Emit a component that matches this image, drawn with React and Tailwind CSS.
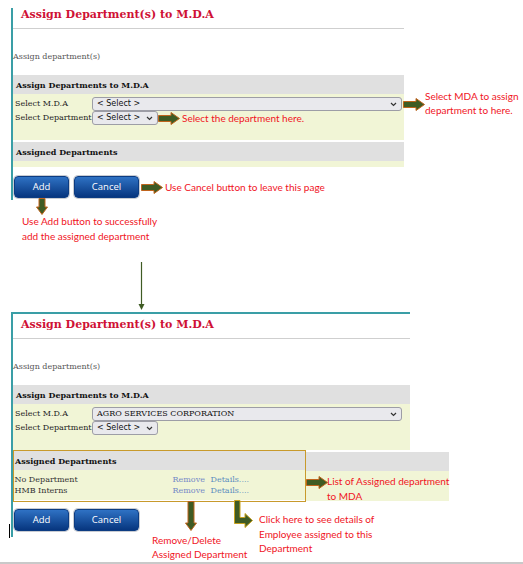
import React from "react"

const serif = "font-['DejaVu_Serif',serif]"
const note = "whitespace-nowrap font-['Lato',sans-serif] text-[10px] text-[#f0141e]"

function RightArrow({ className = "" }) {
  return (
    <svg className={`shrink-0 ${className}`} width="22" height="13" viewBox="0 0 22 13">
      <polygon
        points="0.5,3.5 13,3.5 13,0.5 21.5,6.5 13,12.5 13,9.5 0.5,9.5"
        fill="#3f5b24"
        stroke="#c0641c"
        strokeWidth="1"
      />
    </svg>
  )
}

function DownArrow({ className = "", len }) {
  const h = len
  return (
    <svg className={`shrink-0 ${className}`} width="12" height={h} viewBox={`0 0 12 ${h}`}>
      <polygon
        points={`3,0.5 9,0.5 9,${h - 8} 11.5,${h - 8} 6,${h - 0.5} 0.5,${h - 8} 3,${h - 8}`}
        fill="#3f5b24"
        stroke="#c0641c"
        strokeWidth="1"
      />
    </svg>
  )
}

function Chevron() {
  return (
    <svg width="7" height="5" viewBox="0 0 7 5">
      <path d="M1 1 L3.5 3.5 L6 1" fill="none" stroke="#333" strokeWidth="1.2" />
    </svg>
  )
}

function SelectBox({ value, wide, valueSerif }) {
  return (
    <div
      className={`flex h-[14px] shrink-0 items-center justify-between rounded-[3px] border border-[#9d9da6] bg-[#e9e9ed] pl-[4px] pr-[4px] ${
        wide ? "w-[310px]" : "w-[66px]"
      }`}
    >
      <span
        className={`text-[8px] leading-none text-[#111] ${
          valueSerif ? serif : "font-['DejaVu_Sans',sans-serif]"
        }`}
      >
        {value}
      </span>
      <Chevron />
    </div>
  )
}

function Button({ children, w }) {
  return (
    <div
      className={`flex h-[22px] ${w} items-center justify-center rounded-[4px] border border-[#0c3c82] bg-linear-to-b from-[#2f72c4] to-[#07367f] font-['Open_Sans',sans-serif] text-[9.5px] text-white shadow-[0_0_0_1px_#c9ccd2]`}
    >
      {children}
    </div>
  )
}

function Buttons() {
  return (
    <div className="flex shrink-0 gap-[5px] pl-[1px]">
      <Button w="w-[55px]">Add</Button>
      <Button w="w-[65px]">Cancel</Button>
    </div>
  )
}

function Header({ children, className = "" }) {
  return (
    <div
      className={`flex h-[19px] items-center bg-[#e0e0e0] ${serif} text-[8px] font-bold text-[#111] ${className}`}
    >
      {children}
    </div>
  )
}

function Panel({ top, mda, width, notes, children }) {
  return (
    <div
      className={`ml-[11px] border-l-2 border-[#3a9ea6] ${width} ${
        top ? "border-t-2" : ""
      }`}
    >
      {/* title */}
      <div
        className={`border-b-[1.5px] border-[#cfcfcf] pl-[8px] ${
          top ? "h-[25px] pt-[4px]" : "h-[21px]"
        }`}
      >
        <h1 className={`${serif} text-[11px] font-bold leading-[14px] text-[#cf1135]`}>
          Assign Department(s) to M.D.A
        </h1>
      </div>

      <div className={`h-[46px] pt-[22px] ${serif} text-[8px] leading-[12px] text-[#555]`}>
        Assign department(s)
      </div>

      {/* form section */}
      <Header className="pl-[3px]">Assign Departments to M.D.A</Header>
      <div className={`h-[46px] bg-[#f1f5d6] pt-[3px] pl-[2px] ${serif} text-[8px] text-[#222]`}>
        <div className="flex h-[14px] items-center">
          <span className="w-[77px] shrink-0">Select M.D.A</span>
          <SelectBox value={mda} wide valueSerif={mda !== "< Select >"} />
          {notes && (
            <>
              <RightArrow className="ml-[1px]" />
              <p className={`-mt-[2px] leading-[14px] ${note}`}>
                Select MDA to assign
                <br />
                department to here.
              </p>
            </>
          )}
        </div>
        <div className="flex h-[14px] items-center">
          <span className="w-[77px] shrink-0 whitespace-nowrap">Select Department</span>
          <SelectBox value="< Select >" />
          {notes && (
            <>
              <RightArrow />
              <p className={`ml-[2px] leading-[14px] ${note}`}>Select the department here.</p>
            </>
          )}
        </div>
      </div>

      {children}
    </div>
  )
}

export default function App() {
  const assigned = ["No Department", "HMB Interns"]

  return (
    <div className="relative h-[564px] w-[523px] overflow-hidden bg-white">
      <div className="pt-[8px]">
        <Panel mda="< Select >" width="w-[393px]" notes>
          <Header className="mt-[2px] pl-[3px]">Assigned Departments</Header>
          <div className="h-[6px] bg-[#f1f5d6]" />
          <div className="flex items-center pt-[9px] pb-[2px]">
            <Buttons />
            <RightArrow className="ml-[2px]" />
            <p className={`ml-[2px] leading-[14px] ${note}`}>
              Use Cancel button to leave this page
            </p>
          </div>
        </Panel>
      </div>

      {/* note under Add + connector between the two screenshots */}
      <div className="flex flex-col">
        <DownArrow className="-mt-[2px] ml-[36px]" len={17} />
        <p className={`-mt-[1px] ml-[22px] leading-[15px] ${note}`}>
          Use Add button to successfully
          <br />
          add the assigned department
        </p>
        <svg className="mt-[18px] mb-[2px] ml-[138px]" width="7" height="48" viewBox="0 0 7 48">
          <line x1="3.5" y1="0" x2="3.5" y2="43" stroke="#3f5b24" strokeWidth="1.2" />
          <polygon points="0.5,42 6.5,42 3.5,48" fill="#3f5b24" />
        </svg>
      </div>

      <Panel top mda="AGRO SERVICES CORPORATION" width="w-[399px]">
        <div className="flex h-[52px]">
          {/* highlighted list */}
          <div className={`w-[293px] shrink-0 border-[1.5px] border-[#c89a2c] ${serif} text-[8px]`}>
            <Header className="pl-[1px]">Assigned Departments</Header>
            <div className="bg-[#f1f5d6] pt-[4px] pb-[3px] pl-[0.5px] text-[#333]">
              {assigned.map((d) => (
                <div key={d} className="flex h-[11.5px] items-center">
                  <span className="w-[158px]">{d}</span>
                  <span className="w-[38px] text-[#7488c6]">Remove</span>
                  <span className="text-[#5b8dbf]">Details....</span>
                </div>
              ))}
            </div>
          </div>
          <div className="flex flex-1 flex-col py-[1.5px]">
            <div className="h-[19px] shrink-0 bg-[#e0e0e0]" />
            <div className="flex flex-1 items-start bg-[#f1f5d6] pt-[3px]">
              <RightArrow className="mt-[2px]" />
              <p className={`-ml-[1px] h-[26px] leading-[15px] ${note}`}>
                List of Assigned department
                <br />
                to MDA
              </p>
            </div>
          </div>
        </div>

        <div className="flex h-[35px] items-start">
          <div className="mt-[7px]">
            <Buttons />
          </div>
          <div className="ml-[13px] flex w-[82px] shrink-0 flex-col">
            <DownArrow className="-mt-[1px] ml-[33px]" len={30} />
            <p className={`mt-[2px] leading-[14px] ${note}`}>
              Remove/Delete
              <br />
              Assigned Department
            </p>
          </div>
          <div className="flex items-start">
            <svg className="-mt-[2px] shrink-0" width="20" height="29" viewBox="0 0 20 29">
              <polygon
                points="0.5,0.5 6,0.5 6,17.5 11,17.5 11,13.5 18.5,20.5 11,27.5 11,23.5 0.5,23.5"
                fill="#3f5b24"
                stroke="#c8a21e"
                strokeWidth="1"
              />
            </svg>
            <p className={`mt-[10px] ml-[5px] leading-[14.5px] ${note}`}>
              Click here to see details of
              <br />
              Employee assigned to this
              <br />
              Department
            </p>
          </div>
        </div>
      </Panel>

      <div className="mt-[25px] h-[2px] w-full bg-[#c9c9c9]" />

      {/* stray text cursor in the screenshot */}
      <div className="absolute left-[9px] top-[524px] h-[14px] w-px bg-black" />
    </div>
  )
}
